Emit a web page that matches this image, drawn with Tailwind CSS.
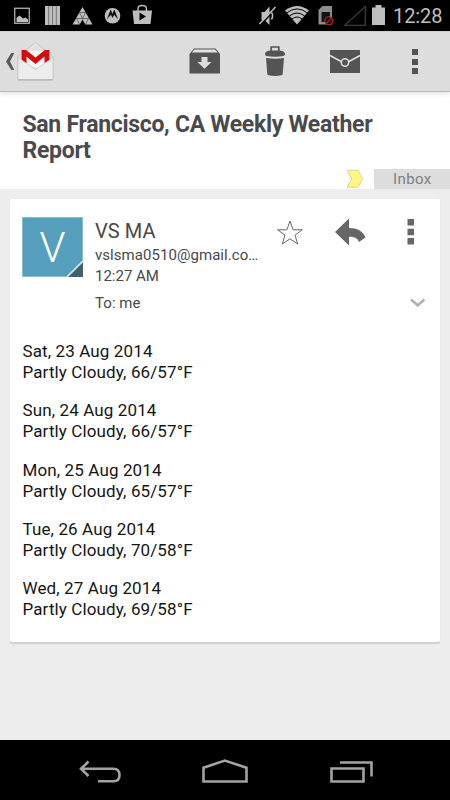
<!DOCTYPE html>
<html lang="en">
<head>
<meta charset="utf-8">
<title>Gmail</title>
<script src="https://cdn.jsdelivr.net/npm/@tailwindcss/browser@4"></script>
</head>
<body class="w-[450px] h-[800px] overflow-hidden bg-[#ededed] font-[Roboto,sans-serif] flex flex-col">
  <!-- status bar -->
  <header class="h-[31px] shrink-0 bg-black flex items-start text-[#bebebe]">
    <svg class="w-[155px] h-[31px] shrink-0" viewBox="0 0 155 31" fill="currentColor">
      <rect x="14.75" y="8.25" width="14.5" height="15" fill="none" stroke="currentColor" stroke-width="1.2"/>
      <path d="M16.5 22V18l3-2.500 3.500 3 2.500-1 2.500 2V22z"/>
      <path d="M45 6h15v19h-15z"/>
      <path d="M48.700 6v19M52.500 6v19M56.300 6v19" stroke="#555" stroke-width=".7"/>
      <path d="M82.500 7L72.500 24.500h7.200l2.800-5 2.800 5h7.200z"/>
      <path d="M79.500 12.500h6M76.500 18.500h12M79.500 12.500l3 6M85.500 12.500l-3 6M76.500 18.500l3.200 6M88.500 18.500l-3.200 6" stroke="#333" stroke-width=".6" fill="none"/>
      <circle cx="112.500" cy="15.700" r="7.800"/>
      <path d="M107.500 18.500l3.200-8.500 1.800 4.500 1.800-4.500 3.200 8.500q-1-2.200-2.300-2.500l-1-2-1.700 3.500-1.700-3.500-1 2q-1.300.3-2.500 2.500z" fill="#000" stroke="#000" stroke-width=".4"/>
      <path d="M132.500 10.500h19.500l-1.500 13.500h-16.500z"/>
      <path d="M138 11V8.500q0-3 4.200-3t4.200 3V11" fill="none" stroke="currentColor" stroke-width="1.4"/>
      <path d="M139.500 12.500v8l6.500-4z" fill="#000"/>
    </svg>
    <svg class="w-[134px] h-[31px] shrink-0 ml-[98px]" viewBox="253 0 134 31" fill="currentColor">
      <path d="M261.500 12h3l5-5.500v18.500l-5-5h-3z"/>
      <path d="M260.800 24.800L276.500 8" stroke="#000" stroke-width="1.600"/>
      <path d="M259.500 24L275.500 7M271.500 12.500q2.200 3 0 7" stroke="currentColor" stroke-width="1.500" fill="none"/>
      <path d="M285 10.500Q297 1.500 309 10.500L297 24.500z"/>
      <path d="M286.500 13Q297 4.800 307.500 13M289.300 16Q297 10 304.700 16M292 19Q297 15 302 19" stroke="#000" stroke-width="1" fill="none"/>
      <path d="M318.500 10l4-4h9.500v18.500h-13.500z" fill="#8d8d8d"/>
      <path d="M321.500 12h8.500v10h-8.500z" fill="#111"/>
      <circle cx="328.800" cy="20.800" r="3.900" fill="#000" stroke="#b5262b" stroke-width="1.300"/>
      <path d="M326.200 23.400l5.200-5.200" stroke="#b5262b" stroke-width="1.300"/>
      <path d="M365.300 6.500v18.800h-20.500z" fill="none" stroke="#3c3c3c" stroke-width="1.300"/>
      <path d="M372 7.500h3.500V5h6v2.500h3.500V25h-13z"/>
    </svg>
    <span class="ml-[6px] mt-[4px] text-[20px] leading-[24px] tracking-[-0.1px] whitespace-nowrap">12:28</span>
  </header>

  <!-- action bar -->
  <nav class="relative z-10 h-[61px] shrink-0 bg-[#ddd] border-t border-[#cfcfcf] border-b border-b-[#b9b9b9] shadow-[0_2px_5px_rgba(0,0,0,0.12)] flex text-[#545454]">
    <svg class="w-[60px] h-[60px] shrink-0" viewBox="0 32 60 60">
      <path d="M11.300 53h3l-4.300 8.500 4.300 8.500h-3L6 61.500z" fill="#595959"/>
      <path d="M18 56.500L35.500 42.500 53 56.500V79.500H18z" fill="#e3e3e3" stroke="#c2c2c2" stroke-width=".8"/>
      <path d="M20.500 50h30v18h-30z" fill="#f4f4f4" stroke="#d0d0d0" stroke-width=".6"/>
      <path d="M21.500 63V50h4.500l9.500 7.500 9.500-7.500h4.500v13h-5v-6.500l-9 7.500-9-7.500V63z" fill="#d40b0b"/>
      <path d="M18 57.500L35.500 69.500 53 57.500V79.500H18z" fill="#ececec" stroke="#c6c6c6" stroke-width=".7"/>
      <path d="M18 80h35" stroke="#aaa" stroke-width="1"/>
    </svg>
    <svg class="w-[38px] h-[60px] ml-[126px] shrink-0" viewBox="186 32 38 60">
      <path d="M189.500 54L194 48.500h21.500l4.500 5.500v19.500h-30.500z" fill="currentColor"/>
      <path d="M191.800 52.500l2.700-3h20.500l2.700 3z" fill="#e2e2e2"/>
      <path d="M201.500 57h6v5h4l-7 6.800-7-6.800h4z" fill="#ddd"/>
    </svg>
    <svg class="w-[30px] h-[60px] ml-[36px] shrink-0" viewBox="260 32 30 60">
      <path d="M271.200 52v-5h7.600v5" fill="none" stroke="currentColor" stroke-width="1.700"/>
      <path d="M265 54q0-3 5-3.500h10q5 .5 5 3.500 0 1.700-1.500 2-8.500 1.500-17 0-1.500-.3-1.500-2zM266 58q9 1.500 18 0l-1.300 16q-.2 1.300-2 1.500-5.700.8-11.400 0-1.800-.2-2-1.500z" fill="currentColor"/>
    </svg>
    <svg class="w-[34px] h-[60px] ml-[38px] shrink-0" viewBox="328 32 34 60">
      <path d="M330 50h30v23h-30z" fill="currentColor"/>
      <path d="M330 55.500l12 6.500M360 55.500L348 62" stroke="#ddd" stroke-width="1.700" fill="none"/>
      <circle cx="345" cy="62.500" r="3.700" fill="#545454" stroke="#ddd" stroke-width="1.500"/>
    </svg>
    <div class="ml-[50px] mt-[17px] flex flex-col gap-[3px]">
      <i class="size-[6px] bg-[#545454]"></i><i class="size-[6px] mt-[0.5px] bg-[#545454]"></i><i class="size-[6px] mt-[0.5px] bg-[#545454]"></i>
    </div>
  </nav>

  <!-- subject -->
  <section class="h-[97px] shrink-0 bg-white flex flex-col">
    <h1 class="pl-[22.500px] pt-[19.500px] h-[77px] text-[23px] leading-[26.500px] font-bold text-[#4a4a4d] tracking-[-0.300px] whitespace-nowrap">San Francisco, CA Weekly Weather<br>Report</h1>
    <div class="h-5 flex justify-end">
      <svg class="w-[18px] h-5 mr-[10px]" viewBox="346 169 18 20"><path d="M347.200 170.200h10.800l4.500 8.500-4.500 8.500h-10.800l4.500-8.500z" fill="#fff781" stroke="#d9d27a" stroke-width=".9"/></svg>
      <span class="w-[76px] h-5 bg-[#ddd] pl-[19px] text-[15px] leading-[20px] tracking-[0.4px] text-[#808080]">Inbox</span>
    </div>
  </section>

  <!-- message -->
  <main class="mt-[10px] mx-[10px] h-[443px] shrink-0 bg-white rounded-[2px] shadow-[0_2px_1px_rgba(0,0,0,0.12)]">
    <div class="flex h-[142px] pl-[12px] pt-[18px]">
      <div class="relative size-[61px] h-[60px] bg-[#569fbc] border border-[#8bbcd0] flex justify-center shrink-0">
        <span class="text-[42px] leading-[59px] font-light text-white">V</span>
        <svg class="absolute -right-px -bottom-px w-4 h-4" viewBox="0 0 16 16"><path d="M16 0v16H0z" fill="#42606c"/><path d="M0 16L16 0" stroke="#d8e8ef" stroke-width="1.600"/></svg>
      </div>
      <div class="ml-[12px] w-[170px] flex flex-col whitespace-nowrap text-[#484848] text-[15px]">
        <span class="mt-[2px] text-[20px] leading-6 tracking-[0.1px]">VS MA</span>
        <span class="mt-[2px] leading-[21px] tracking-[0.050px]">vslsma0510@gmail.co…</span>
        <span class="leading-[20px]">12:27 AM</span>
        <span class="mt-[7px] leading-[21px] tracking-[0.050px]">To: me</span>
      </div>
      <svg class="w-[165px] h-[110px] shrink-0" viewBox="265 217 165 110">
        <path d="M290 221l3.100 8.800h9.200l-7.300 5.400 2.700 8.800-7.700-5.200-7.700 5.200 2.700-8.800-7.300-5.400h9.200z" fill="none" stroke="#666" stroke-width="1"/>
        <path d="M335 232l14-13.500v9.500c8 0 14 3 16.500 9.500l-6.500 4.500c-1.500-4-5-5.500-10-5.200v8.700z" fill="#666"/>
        <path d="M407.500 219h6.500v6.500h-6.500zM407.500 228.700h6.500v6.500h-6.500zM407.500 238h6.500v6.500h-6.500z" fill="#666"/>
        <path d="M411 299.500l6.700 5.700 6.700-5.700" fill="none" stroke="#b0b0b0" stroke-width="2.600"/>
      </svg>
    </div>
    <div class="pl-[12.500px] flex flex-col gap-[17.250px] text-[17px] leading-[21px] tracking-[0.12px] text-[#151515] whitespace-nowrap">
      <p>Sat, 23 Aug 2014<br>Partly Cloudy, 66/57°F</p>
      <p>Sun, 24 Aug 2014<br>Partly Cloudy, 66/57°F</p>
      <p>Mon, 25 Aug 2014<br>Partly Cloudy, 65/57°F</p>
      <p>Tue, 26 Aug 2014<br>Partly Cloudy, 70/58°F</p>
      <p>Wed, 27 Aug 2014<br>Partly Cloudy, 69/58°F</p>
    </div>
  </main>

  <!-- navigation bar -->
  <footer class="mt-auto h-[60px] shrink-0 bg-black flex">
    <svg class="w-[450px] h-[60px]" viewBox="0 740 450 60" fill="none" stroke="#a3a3a3" stroke-width="2.600">
      <path d="M88.500 761.500l-7.500 7.300 7.500 7.200M81 768.700h32.500q6 0 6 6.300t-6 6.300H98"/>
      <path d="M203.500 781.500v-13.700l21.300-7.300 21.700 7.300v13.700z"/>
      <path d="M331.500 768.500h32v13h-32zM340 762.500h31.500v14"/>
    </svg>
  </footer>
</body>
</html>
